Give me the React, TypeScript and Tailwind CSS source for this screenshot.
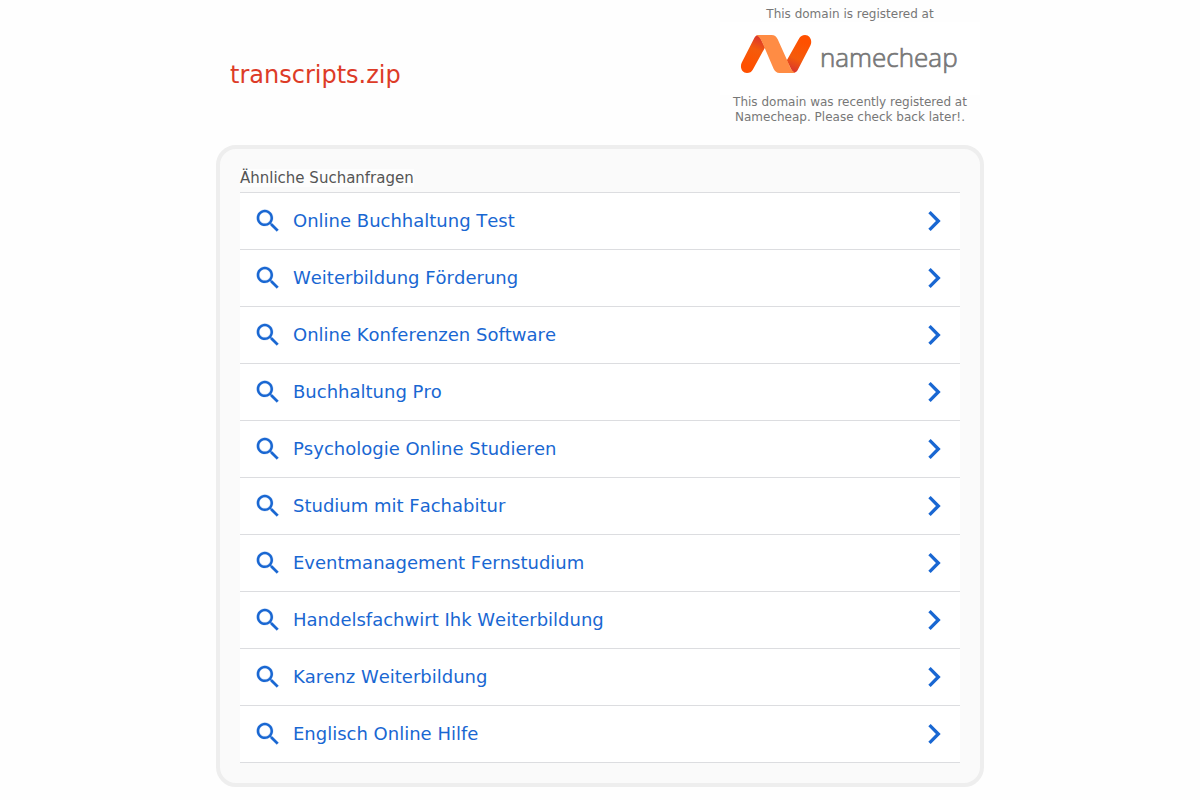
const searches = [
  "Online Buchhaltung Test",
  "Weiterbildung Förderung",
  "Online Konferenzen Software",
  "Buchhaltung Pro",
  "Psychologie Online Studieren",
  "Studium mit Fachabitur",
  "Eventmanagement Fernstudium",
  "Handelsfachwirt Ihk Weiterbildung",
  "Karenz Weiterbildung",
  "Englisch Online Hilfe",
];

function SearchIcon() {
  return (
    <svg viewBox="0 0 24 24" className="size-[30px] shrink-0 fill-current stroke-current" strokeWidth="0.15" aria-hidden="true">
      <path d="M15.5 14h-.79l-.28-.27C15.41 12.59 16 11.11 16 9.5 16 5.91 13.09 3 9.5 3S3 5.91 3 9.5 5.91 16 9.5 16c1.61 0 3.09-.59 4.23-1.57l.27.28v.79l5 4.99L20.49 19l-4.99-5zm-6 0C7.01 14 5 11.99 5 9.5S7.01 5 9.5 5 14 7.01 14 9.5 11.99 14 9.5 14z" />
    </svg>
  );
}

function ChevronIcon() {
  return (
    <svg viewBox="0 0 24 24" className="ml-auto size-10 shrink-0 fill-current" aria-hidden="true">
      <path d="M10 6L8.59 7.41 13.17 12l-4.58 4.59L10 18l6-6z" />
    </svg>
  );
}

function NamecheapMark() {
  return (
    <svg viewBox="0 0 72 40" className="h-10 w-[72px] shrink-0" aria-hidden="true">
      <defs>
        <linearGradient id="left-stroke" x1="8" y1="32" x2="20" y2="4" gradientUnits="userSpaceOnUse">
          <stop offset="0" stopColor="#ff5000" />
          <stop offset="0.6" stopColor="#f45b0c" />
          <stop offset="1" stopColor="#db382b" />
        </linearGradient>
        <linearGradient id="right-stroke" x1="64" y1="8" x2="52" y2="36" gradientUnits="userSpaceOnUse">
          <stop offset="0" stopColor="#ff5000" />
          <stop offset="0.6" stopColor="#f45b0c" />
          <stop offset="1" stopColor="#db382b" />
        </linearGradient>
      </defs>
      <path d="M19 1C16.8 1 15.2 2.2 14.3 3.9L1.8 28.6C-.5 33.2 2 39 7 39c2.6 0 4.7-1.3 5.9-3.6L25 13.5Z" fill="url(#left-stroke)" />
      <path d="M53 39c2.2 0 3.8-1.2 4.7-2.9L70.4 11.4C72.7 6.8 70 1 65 1c-2.6 0-4.7 1.3-5.9 3.6L46.7 26.5Z" fill="url(#right-stroke)" />
      <path d="M18.5 1H31.5C34.5 1 36.4 2.6 37.7 5.2L48.6 29.5C50.4 33.5 51.4 37 55 38.4C54.4 38.8 53.8 39 53 39H39.5C36.700 39 34.900 37.400 33.600 34.800L23.200 10.500C21.200 6 19.500 2.300 16 1.600C16.800 1.200 17.600 1 18.500 1Z" fill="#ff8c44" />
    </svg>
  );
}

export default function App() {
  return (
    <div className="min-h-screen bg-[#fefefe] pb-3 font-['DejaVu_Sans',sans-serif]">
      <div className="mx-auto max-w-[768px]">
        <header className="flex h-[145px] items-start justify-between pl-3.5 pr-1">
          <h1 className="pt-[59px] text-2xl leading-8 text-[#dd3b27]">transcripts.zip</h1>
          <div className="w-[260px] pt-[7px] text-center text-xs leading-[15px] text-[#777777]">
            <p>This domain is registered at</p>
            <a
              href="#namecheap"
              className="flex h-[73px] items-start gap-2 bg-white pl-5 pt-3 text-[#777777]"
            >
              <NamecheapMark />
              <span className="pt-[3px] font-['Open_Sans',sans-serif] text-[26px] font-light leading-10 [-webkit-text-stroke:0.7px_#777777]">
                namecheap
              </span>
            </a>
            <p>This domain was recently registered at Namecheap. Please check back later!.</p>
          </div>
        </header>
        <main className="rounded-[20px] border-4 border-[#eeeeee] bg-[#fafafa] p-5">
          <h2 className="w-fit bg-[#fdfdfd] text-[15px] leading-[18px] text-[#555555]">Ähnliche Suchanfragen</h2>
          <ul className="mt-[5px] border-t border-[#dcdde0] bg-white">
            {searches.map((label) => (
              <li key={label} className="border-b border-[#dcdde0]">
                <a href="#suche" className="flex h-14 items-center pl-[13px] pr-1.5 text-lg text-[#1967d2] [font-kerning:none]">
                  <SearchIcon />
                  <span className="pl-2.5">{label}</span>
                  <ChevronIcon />
                </a>
              </li>
            ))}
          </ul>
        </main>
      </div>
    </div>
  );
}
